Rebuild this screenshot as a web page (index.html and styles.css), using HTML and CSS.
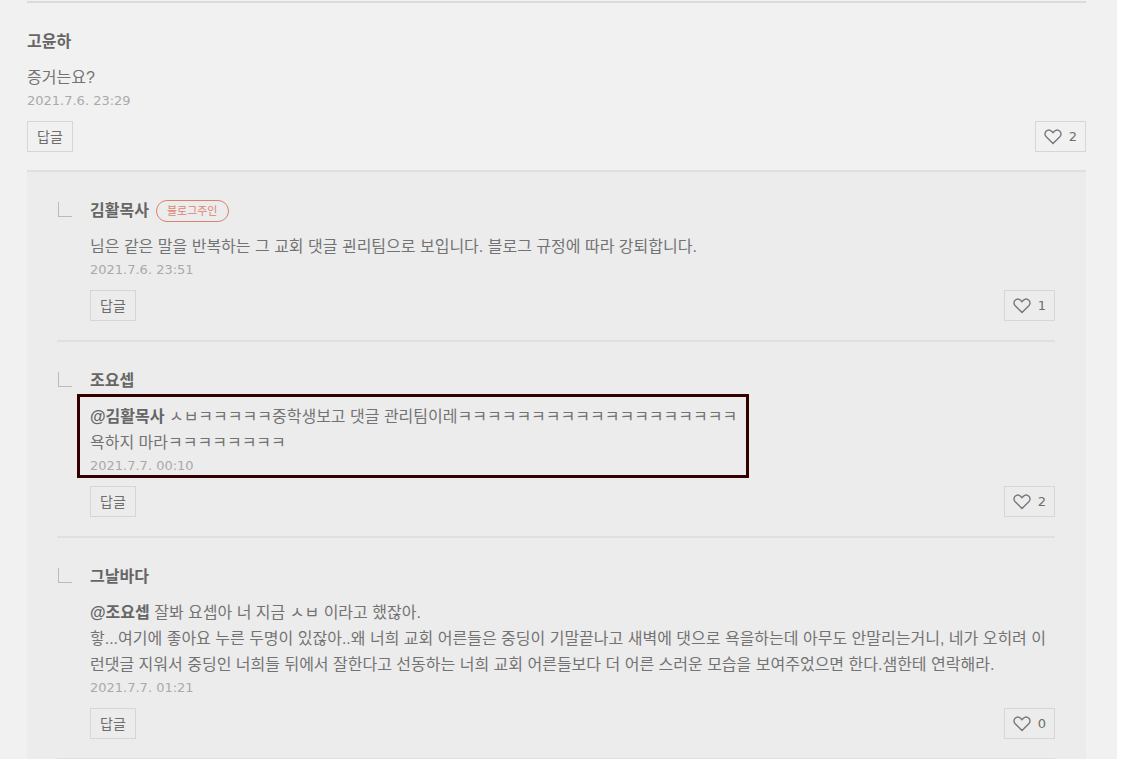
FILE: index.html
```html
<!DOCTYPE html>
<html lang="ko">
<head>
	<meta charset="UTF-8">
	<title>댓글</title>
	<link rel="stylesheet" href="styles.css">
</head>
<body>
	<svg class="sprite" aria-hidden="true">
		<symbol id="heart" viewBox="0 0 18 16">
			<path d="M9 14.4 L2.2 7.8 C0.6 6.1 0.6 3.6 2.1 2.2 C3.7 0.7 6.1 0.8 7.6 2.3 L9 3.7 L10.4 2.3 C11.9 0.8 14.3 0.7 15.9 2.2 C17.4 3.6 17.4 6.1 15.8 7.8 Z"/>
		</symbol>
	</svg>

	<main class="page">
		<div class="comments">
			<article class="comment">
				<h3 class="name">고윤하</h3>
				<div class="content">
					<p class="text">증거는요?</p>
					<p class="date">2021.7.6. 23:29</p>
				</div>
				<div class="tools">
					<button type="button" class="btn">답글</button>
					<button type="button" class="btn like" aria-label="좋아요 2"><svg class="heart"><use href="#heart"/></svg>2</button>
				</div>
			</article>

			<div class="replies">
				<article class="comment reply">
					<h3 class="name">김활목사<span class="owner">블로그주인</span></h3>
					<div class="content">
						<p class="text">님은 같은 말을 반복하는 그 교회 댓글 괸리팀으로 보입니다. 블로그 규정에 따라 강퇴합니다.</p>
						<p class="date">2021.7.6. 23:51</p>
					</div>
					<div class="tools">
						<button type="button" class="btn">답글</button>
						<button type="button" class="btn like" aria-label="좋아요 1"><svg class="heart"><use href="#heart"/></svg>1</button>
					</div>
				</article>

				<article class="comment reply">
					<h3 class="name">조요셉</h3>
					<div class="content marked">
						<p class="text"><b>@김활목사</b> ㅅㅂㅋㅋㅋㅋㅋ중학생보고 댓글 관리팀이레ㅋㅋㅋㅋㅋㅋㅋㅋㅋㅋㅋㅋㅋㅋㅋㅋㅋㅋㅋ<br>욕하지 마라ㅋㅋㅋㅋㅋㅋㅋㅋ</p>
						<p class="date">2021.7.7. 00:10</p>
					</div>
					<div class="tools">
						<button type="button" class="btn">답글</button>
						<button type="button" class="btn like" aria-label="좋아요 2"><svg class="heart"><use href="#heart"/></svg>2</button>
					</div>
				</article>

				<article class="comment reply">
					<h3 class="name">그날바다</h3>
					<div class="content">
						<p class="text"><b>@조요셉</b> 잘봐 요셉아 너 지금 ㅅㅂ 이라고 했잖아.<br>핳...여기에 좋아요 누른 두명이 있잖아..왜 너희 교회 어른들은 중딩이 기말끝나고 새벽에 댓으로 욕을하는데 아무도 안말리는거니, 네가 오히려 이런댓글 지워서 중딩인 너희들 뒤에서 잘한다고 선동하는 너희 교회 어른들보다 더 어른 스러운 모습을 보여주었으면 한다.샘한테 연락해라.</p>
						<p class="date">2021.7.7. 01:21</p>
					</div>
					<div class="tools">
						<button type="button" class="btn">답글</button>
						<button type="button" class="btn like" aria-label="좋아요 0"><svg class="heart"><use href="#heart"/></svg>0</button>
					</div>
				</article>
			</div>
		</div>
	</main>
</body>
</html>
```

FILE: styles.css
```css
*{
	margin: 0;
	padding: 0;
	box-sizing: border-box;
}
html{
	overflow: hidden;
}
body{
	background: #fff;
	color: #737373;
	font: 16px/26px "Liberation Sans", "Noto Sans CJK KR", sans-serif;
}
.sprite{
	display: none;
}
.page{
	min-height: 100vh;
	margin-right: 6px;
	padding: 0 31px 0 27px;
	background: #f1f1f1;
}
.comments{
	padding-top: 1px;
}
.comments::before{
	content: "";
	display: block;
	border-top: 2px solid #dbdbdb;
}
.comment{
	padding: 28px 0 18px;
}
.name{
	display: flex;
	align-items: center;
	height: 22px;
	margin-bottom: 12px;
	color: #666;
	font-size: 16px;
	font-weight: bold;
}
.owner{
	margin-left: 7px;
	padding: 0 10px;
	border: 1px solid #d9826c;
	border-radius: 11px;
	color: #dc8570;
	font-size: 11px;
	font-weight: normal;
	line-height: 20px;
}
.text b{
	color: #666;
}
.date{
	color: #aaa;
	font: 13px/20px "DejaVu Sans", sans-serif;
}
.tools{
	display: flex;
	justify-content: space-between;
	margin-top: 10px;
}
.btn{
	height: 31px;
	padding: 0 9px;
	border: 1px solid #d6d6d6;
	background: none;
	color: #6e6e6e;
	font: 14px/20px "Liberation Sans", "Noto Sans CJK KR", sans-serif;
}
.like{
	display: flex;
	align-items: center;
	gap: 7px;
	padding: 0 8px;
	font: 13px/20px "DejaVu Sans", sans-serif;
}
.heart{
	width: 18px;
	height: 16px;
	fill: none;
	stroke: #777;
	stroke-width: 1.4;
}

/* 답글 목록 */
.replies{
	padding: 0 31px 0 30px;
	border-top: 2px solid #dfdfdf;
	background: #ececec;
}
.reply{
	position: relative;
	padding: 28px 0 19px 33px;
	border-bottom: 2px solid #e0e0e0;
}
.reply::before{
	content: "";
	position: absolute;
	left: 1px;
	top: 30px;
	width: 13px;
	height: 14px;
	border: solid #bbb;
	border-width: 0 0 1px 1px;
}

/* 강조 상자 */
.marked{
	position: relative;
	width: fit-content;
}
.marked::after{
	content: "";
	position: absolute;
	inset: -10px -12px -2px -13px;
	border: 3px solid #300;
}
```
